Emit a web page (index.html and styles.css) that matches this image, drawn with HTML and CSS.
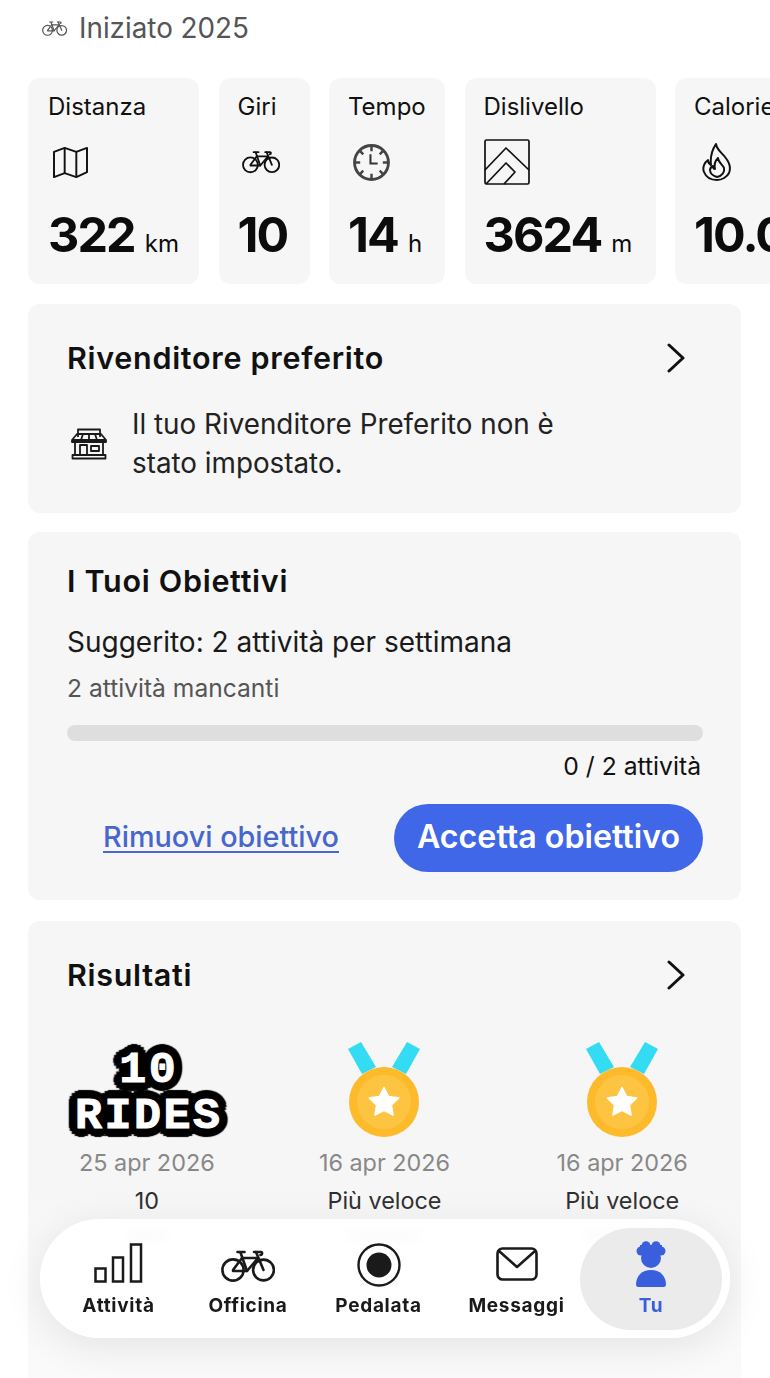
FILE: index.html
```html
<!DOCTYPE html>
<html lang="it">
<head>
<meta charset="utf-8">
<title>Profilo</title>
<link rel="stylesheet" href="styles.css">
</head>
<body>
<svg class="defs" width="0" height="0" aria-hidden="true">
  <symbol id="bike" viewBox="0 0 54 34">
    <g fill="none" stroke="currentColor" stroke-width="2.6" stroke-linecap="round" stroke-linejoin="round">
      <circle cx="12" cy="21" r="10.6"/>
      <circle cx="42.5" cy="21" r="10.4"/>
      <path d="M12 21 21 9H37L26 22H12"/>
      <path d="M19.5 3.5 26 22"/>
      <path d="M35 3 42.5 21"/>
      <path d="M16.5 3H23.5"/>
      <path d="M33 3H40c1.500 0 1.500 3-.5 3"/>
    </g>
  </symbol>
  <symbol id="chev" viewBox="0 0 20 30">
    <path d="M3 2 17 15 3 28" fill="none" stroke="currentColor" stroke-width="3" stroke-linecap="round" stroke-linejoin="round"/>
  </symbol>
  <symbol id="medal" viewBox="0 0 76 96">
    <path d="M2 8 15 1 30 26 16 33Z" fill="#33dcf2"/>
    <path d="M74 8 61 1 46 26 60 33Z" fill="#33dcf2"/>
    <circle cx="38" cy="61" r="35" fill="#fdbb2c"/>
    <circle cx="38" cy="61" r="27" fill="#fdc441"/>
    <path d="M38 46.500 42.600 55.600 52.700 57 45.400 64.100 47.100 74.200 38 69.400 28.900 74.200 30.600 64.100 23.300 57 33.400 55.600Z" fill="#fff" stroke="#fff" stroke-width="1.500" stroke-linejoin="round"/>
  </symbol>
</svg>

<main class="page">
  <header class="started">
    <svg class="started-icon"><use href="#bike"/></svg>
    <span>Iniziato 2025</span>
  </header>

  <section class="stats">
    <article class="stat">
      <h3 class="stat-label">Distanza</h3>
      <div class="stat-icon">
        <svg class="ic-map" viewBox="0 0 38 34" fill="none" stroke="currentColor" stroke-width="2" stroke-linejoin="round">
          <path d="M2 6 13 2 25 6 36 2V27L25 32 13 28 2 32Z"/>
          <path d="M13 2V28M25 6V32"/>
        </svg>
      </div>
      <p class="stat-value">322<small>km</small></p>
    </article>
    <article class="stat">
      <h3 class="stat-label">Giri</h3>
      <div class="stat-icon"><svg class="ic-bike"><use href="#bike"/></svg></div>
      <p class="stat-value">10</p>
    </article>
    <article class="stat">
      <h3 class="stat-label">Tempo</h3>
      <div class="stat-icon">
        <svg class="ic-clock" viewBox="0 0 36 36" fill="none" stroke="#444" stroke-width="2">
          <circle cx="18" cy="18" r="16.500" stroke-width="2.800"/>
          <path d="M18 2V7M18 29V34M2 18H7M29 18H34M7 7 10 10M26 26 29 29M29 7 26 10M7 29 10 26" stroke-width="2.400"/>
          <path d="M17 10V19H24" stroke="#333" stroke-width="2"/>
        </svg>
      </div>
      <p class="stat-value">14<small>h</small></p>
    </article>
    <article class="stat">
      <h3 class="stat-label">Dislivello</h3>
      <div class="stat-icon">
        <svg class="ic-mount" viewBox="0 0 46 46" fill="none" stroke="currentColor" stroke-width="1.700" stroke-linejoin="round">
          <rect x="1" y="1" width="44" height="44" rx="1.500"/>
          <path d="M1 31 22 9 45 31"/>
          <path d="M2 45 22 24 31 33 20 45"/>
        </svg>
      </div>
      <p class="stat-value">3624<small>m</small></p>
    </article>
    <article class="stat">
      <h3 class="stat-label">Calorie</h3>
      <div class="stat-icon">
        <svg class="ic-flame" viewBox="0 0 30 38" fill="none" stroke="currentColor" stroke-width="2" stroke-linejoin="round">
          <path d="M14 1C15 7 19 9 23 14 28 20 29 25 27 30 25 34 20 37 15 37 9 37 4 34 2 29 0 24 3 19 6 17 6 20 7 21 9 22 8 14 10 7 14 1Z"/>
          <path d="M16 15C16 19 20 21 22 25 23 29 20 33 15 34 11 33 8 30 8 27 8 25 9 24 11 23 11 25 12 26 13 26 12 22 13 18 16 15Z"/>
        </svg>
      </div>
      <p class="stat-value">10.026<small>kcal</small></p>
    </article>
  </section>

  <section class="card dealer">
    <div class="card-head">
      <h2 class="card-title">Rivenditore preferito</h2>
      <svg class="chev"><use href="#chev"/></svg>
    </div>
    <div class="dealer-body">
      <svg class="ic-shop" viewBox="0 0 36 32" fill="none" stroke="currentColor" stroke-width="1.800" stroke-linejoin="round">
        <path d="M7 9V1.500H29V9"/>
        <path d="M1 12 6 6H30L35 12Z M1 12V14H35V12"/>
        <path d="M12 6 10 12M18 6V12M24 6 26 12"/>
        <path d="M4 14V27M32 14V27"/>
        <rect x="9" y="17" width="7" height="10"/>
        <rect x="20" y="18" width="8" height="5"/>
        <rect x="1.500" y="27" width="33" height="3.500"/>
      </svg>
      <p>Il tuo Rivenditore Preferito non è<br>stato impostato.</p>
    </div>
  </section>

  <section class="card goals">
    <h2 class="card-title">I Tuoi Obiettivi</h2>
    <p class="goal-main">Suggerito: 2 attività per settimana</p>
    <p class="goal-sub">2 attività mancanti</p>
    <div class="bar"></div>
    <p class="goal-count">0 / 2 attività</p>
    <div class="goal-actions">
      <a class="goal-link" href="#">Rimuovi obiettivo</a>
      <a class="goal-btn" href="#">Accetta obiettivo</a>
    </div>
  </section>

  <section class="card results">
    <div class="card-head">
      <h2 class="card-title">Risultati</h2>
      <svg class="chev"><use href="#chev"/></svg>
    </div>
    <div class="awards">
      <div class="award">
        <div class="award-art rides"><span>10</span><span>RIDES</span></div>
        <p class="award-date">25 apr 2026</p>
        <p class="award-name">10</p>
        <i class="ghost short"></i>
      </div>
      <div class="award">
        <div class="award-art"><svg class="medal"><use href="#medal"/></svg></div>
        <p class="award-date">16 apr 2026</p>
        <p class="award-name">Più veloce</p>
        <i class="ghost"></i>
      </div>
      <div class="award">
        <div class="award-art"><svg class="medal"><use href="#medal"/></svg></div>
        <p class="award-date">16 apr 2026</p>
        <p class="award-name">Più veloce</p>
        <i class="ghost"></i>
      </div>
    </div>
  </section>
</main>

<div class="fade"></div>

<nav class="tabbar">
  <a class="tab tab-a" href="#">
    <svg class="tab-icon ic-bars" viewBox="0 0 50 40" fill="none" stroke="currentColor" stroke-width="2.500">
      <rect x="1.500" y="25.500" width="10" height="13"/>
      <rect x="19" y="14.500" width="10" height="24"/>
      <rect x="37" y="1.500" width="10" height="37"/>
    </svg>
    <span>Attività</span>
  </a>
  <a class="tab tab-b" href="#">
    <svg class="tab-icon ic-navbike"><use href="#bike"/></svg>
    <span>Officina</span>
  </a>
  <a class="tab tab-c" href="#">
    <svg class="tab-icon ic-rec" viewBox="0 0 44 44">
      <circle cx="22" cy="22" r="20.500" fill="none" stroke="currentColor" stroke-width="2.400"/>
      <circle cx="22" cy="22" r="12.500" fill="currentColor"/>
    </svg>
    <span>Pedalata</span>
  </a>
  <a class="tab tab-d" href="#">
    <svg class="tab-icon ic-mail" viewBox="0 0 42 34" fill="none" stroke="currentColor" stroke-width="2.600" stroke-linejoin="round" stroke-linecap="round">
      <rect x="1.500" y="1.500" width="39" height="31" rx="5"/>
      <path d="M3 4 21 20 39 4"/>
    </svg>
    <span>Messaggi</span>
  </a>
  <a class="tab tab-active" href="#">
    <svg class="tab-icon ic-user" viewBox="0 0 30 46" fill="currentColor">
      <circle cx="15" cy="17" r="10"/>
      <circle cx="5" cy="10" r="4.500"/>
      <circle cx="25" cy="10" r="4.500"/>
      <circle cx="10" cy="4.800" r="4.500"/>
      <circle cx="20" cy="4.800" r="4.500"/>
      <rect x="4" y="4" width="22" height="10"/>
      <path d="M0 43.500C0 35 6 29 15 29S30 35 30 43.500C30 45 29 46 28 46H2C1 46 0 45 0 43.500Z"/>
    </svg>
    <span>Tu</span>
  </a>
</nav>
</body>
</html>
```

FILE: styles.css
```css
* { box-sizing: border-box; }
html, body { margin: 0; padding: 0; }
body {
  position: relative;
  width: 770px;
  height: 1378px;
  overflow: hidden;
  background: #fff;
  color: #111;
  font-family: Inter, "Noto Sans", sans-serif;
}
h2, h3, p { margin: 0; font-weight: 400; }
a { color: inherit; text-decoration: none; }
.defs { position: absolute; }
svg { display: block; }

.page {
  display: flex;
  flex-direction: column;
  padding: 0 29px 0 28px;
}

.started {
  display: flex;
  align-items: center;
  gap: 12px;
  height: 78px;
  padding: 0 0 22px 14px;
  color: #555;
  font-size: 27.800px;
}
.started-icon { width: 25px; height: 17px; color: #555; }

.stats {
  display: flex;
  gap: 19.500px;
  height: 206px;
  margin-right: -29px;
  overflow: hidden;
  flex: none;
}
.stat {
  flex: none;
  display: flex;
  flex-direction: column;
  padding: 0 20px;
  background: #f6f6f6;
  border-radius: 12px;
}
.stat:nth-child(1) { width: 171px; }
.stat:nth-child(2) { width: 91px; padding: 0 0 0 19px; }
.stat:nth-child(3) { width: 116px; padding: 0 0 0 19px; }
.stat:nth-child(4) { width: 191px; padding: 0 0 0 19px; }
.stat:nth-child(5) { padding-left: 19px; }
.stat-label { font-size: 24px; line-height: 28px; margin-top: 15px; color: #111; }
.stat-icon {
  height: 62px;
  margin-top: 10px;
  display: flex;
  align-items: center;
}
.stat-value {
  margin-top: 12px;
  font-size: 48.500px;
  line-height: 60px;
  font-weight: 700;
  letter-spacing: -1.900px;
  white-space: nowrap;
  color: #0c0c0c;
}
.stat-value small {
  margin-left: 10px;
  font-size: 24px;
  font-weight: 400;
  letter-spacing: 0;
}
.ic-map { width: 37px; height: 33px; margin-left: 4px; }
.ic-bike { width: 38px; height: 24px; margin-left: 4px; }
.ic-clock { width: 37px; height: 37px; margin-left: 5px; }
.ic-mount { width: 46px; height: 46px; }
.ic-flame { width: 30px; height: 38px; margin-left: 8px; }

.card {
  flex: none;
  background: #f6f6f6;
  border-radius: 12px;
  margin-top: 20px;
  padding: 0 39px;
}
.card-head {
  display: flex;
  justify-content: space-between;
  align-items: center;
  padding-right: 16px;
}
.card-title {
  font-size: 30.500px;
  line-height: 36px;
  font-weight: 600;
  letter-spacing: .7px;
  color: #111;
}
.chev { width: 20px; height: 30px; color: #111; }

.dealer { height: 209px; padding-top: 36px; }
.dealer-body {
  display: flex;
  align-items: center;
  gap: 25px;
  margin-top: 29px;
  padding-left: 4px;
  font-size: 27.800px;
  line-height: 39px;
  color: #222;
}
.ic-shop { width: 36px; height: 32px; color: #1a1a1a; }

.goals { height: 368px; padding: 31px 38px 0 39px; margin-top: 19px; }
.goal-main { margin-top: 25px; font-size: 28px; line-height: 36px; color: #1a1a1a; }
.goal-sub { margin-top: 14px; font-size: 24.600px; line-height: 28px; color: #555; }
.bar { margin-top: 23px; height: 16px; border-radius: 8px; background: #dedede; }
.goal-count { margin-top: 10px; padding-right: 2px; text-align: right; font-size: 24.700px; line-height: 30px; color: #111; }
.goal-actions {
  display: flex;
  align-items: center;
  justify-content: flex-end;
  gap: 55px;
  margin-top: 23px;
}
.goal-link {
  padding-bottom: 4px;
  font-size: 28.800px;
  font-weight: 500;
  color: #4767cc;
  text-decoration: underline;
  text-underline-offset: 4px;
}
.goal-btn {
  display: flex;
  align-items: center;
  justify-content: center;
  width: 309px;
  height: 68px;
  padding-bottom: 4px;
  border-radius: 34px;
  background: #3f67e8;
  color: #fff;
  font-size: 32.200px;
  font-weight: 600;
}

.results {
  margin-top: 21px;
  height: 500px;
  padding: 36px 0 0;
}
.results .card-head { padding: 0 55px 0 39px; }
.awards {
  display: grid;
  grid-template-columns: repeat(3, 1fr);
  margin-top: 48px;
}
.award { display: flex; flex-direction: column; align-items: center; }
.award-art { height: 96px; display: flex; align-items: center; justify-content: center; }
.medal { width: 76px; height: 96px; }
.rides {
  flex-direction: column;
  padding: 10px 0 0 4px;
  font-family: "Liberation Mono", "DejaVu Sans Mono", monospace;
  font-weight: 700;
  font-size: 45px;
  line-height: 46px;
  letter-spacing: 2.500px;
  color: #fff;
  -webkit-text-stroke: 1px #fff;
  text-shadow:
    9px 0 1px #000, -9px 0 1px #000, 0 9px 1px #000, 0 -9px 1px #000,
    6.400px 6.400px 1px #000, -6.400px 6.400px 1px #000, 6.400px -6.400px 1px #000, -6.400px -6.400px 1px #000,
    8.300px 3.400px 1px #000, -8.300px 3.400px 1px #000, 8.300px -3.400px 1px #000, -8.300px -3.400px 1px #000,
    3.400px 8.300px 1px #000, -3.400px 8.300px 1px #000, 3.400px -8.300px 1px #000, -3.400px -8.300px 1px #000,
    4px 0 0 #000, -4px 0 0 #000, 0 4px 0 #000, 0 -4px 0 #000;
}
.award-date { margin-top: 10px; font-size: 23.400px; line-height: 32px; color: #888; }
.award-name { margin-top: 7px; font-size: 23.400px; line-height: 30px; color: #222; }
.ghost { width: 76px; height: 8px; margin-top: 15px; border-radius: 4px; background: #666; }
.ghost.short { width: 40px; }

.fade {
  position: absolute;
  left: 0;
  right: 0;
  top: 1170px;
  bottom: 0;
  background: linear-gradient(rgba(255,255,255,0), rgba(255,255,255,.45));
}

.tabbar {
  position: absolute;
  left: 40px;
  top: 1219px;
  width: 690px;
  height: 119px;
  border-radius: 60px;
  background: rgba(255,255,255,.96);
  backdrop-filter: blur(6px);
  box-shadow: 0 8px 40px rgba(0,0,0,.09);
  display: flex;
  align-items: stretch;
  padding: 9px 8px 8px 0;
}
.tab {
  display: flex;
  flex-direction: column;
  align-items: center;
  justify-content: flex-end;
  padding-bottom: 12px;
  color: #1a1a1a;
  font-size: 19px;
  font-weight: 700;
  letter-spacing: .7px;
  line-height: 24px;
}
.tab-a { width: 157px; }
.tab-b { width: 102px; }
.tab-c { width: 159px; }
.tab-d { width: 117px; }
.tab-active {
  width: 142px;
  margin-left: auto;
  background: #ebebeb;
  border-radius: 51px;
  color: #3a5fdc;
}
.tab-icon { margin-bottom: 11px; }
.ic-bars { width: 50px; height: 40px; }
.ic-navbike { width: 54px; height: 34px; }
.ic-rec { width: 44px; height: 44px; margin-bottom: 7px; }
.ic-mail { width: 42px; height: 34px; margin-bottom: 13px; }
.ic-user { width: 30px; height: 46px; margin-bottom: 7px; }
```
